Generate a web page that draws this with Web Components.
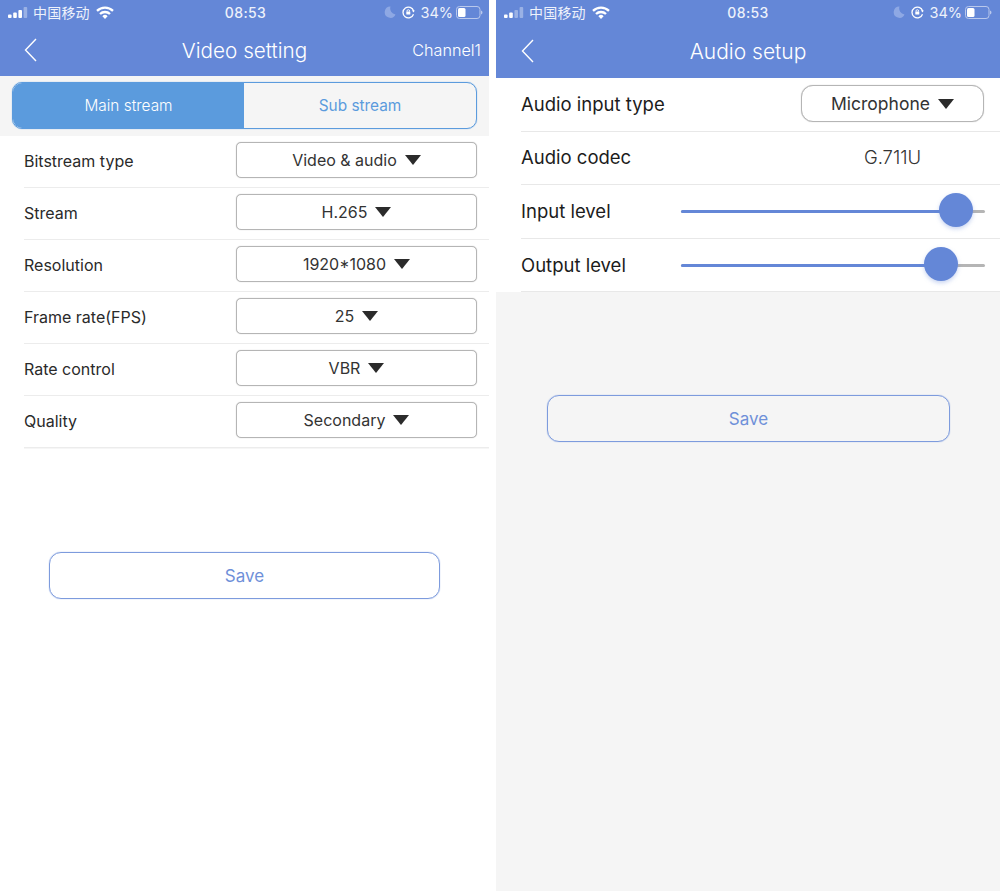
<!DOCTYPE html>
<html lang="en">
<head>
<meta charset="utf-8">
<title>Video and audio settings</title>
<style>
  html, body { margin: 0; height: 100%; background: #fff; }
  body {
    display: flex;
    gap: 7px;
    width: 1000px;
    height: 891px;
    overflow: hidden;
    font-family: Inter, "Noto Sans CJK SC", sans-serif;
  }
  #video { width: 489px; --head: 76px; --bottom: #fff; --pad-right: 6px; --chevron: 24px; --title: 20.7px; }
  #audio { width: 504px; --head: 78px; --bottom: #f5f5f5; --pad-right: 8px; --chevron: 25px; --title: 21px; }
</style>
</head>
<body>
<phone-screen id="video">
  <nav-bar title="Video setting" side="Channel1" signal="3"></nav-bar>
  <stream-tabs></stream-tabs>
  <setting-row label="Bitstream type"><drop-select value="Video &amp; audio"></drop-select></setting-row>
  <setting-row label="Stream"><drop-select value="H.265"></drop-select></setting-row>
  <setting-row label="Resolution"><drop-select value="1920*1080"></drop-select></setting-row>
  <setting-row label="Frame rate(FPS)"><drop-select value="25"></drop-select></setting-row>
  <setting-row label="Rate control"><drop-select value="VBR"></drop-select></setting-row>
  <setting-row label="Quality"><drop-select value="Secondary"></drop-select></setting-row>
  <save-button style="--top:104px;--left:49px;--width:391px;--height:47px"></save-button>
</phone-screen>

<phone-screen id="audio">
  <nav-bar title="Audio setup" signal="2"></nav-bar>
  <setting-row big label="Audio input type"><drop-select round value="Microphone"></drop-select></setting-row>
  <setting-row big label="Audio codec"><plain-value>G.711U</plain-value></setting-row>
  <setting-row big label="Input level"><level-slider level="275"></level-slider></setting-row>
  <setting-row big label="Output level"><level-slider level="260"></level-slider></setting-row>
  <save-button style="--top:103px;--left:51px;--width:403px;--height:47px"></save-button>
</phone-screen>

<script>
class PhoneScreen extends HTMLElement {
  constructor() {
    super();
    this.attachShadow({ mode: 'open' });
    this.shadowRoot.innerHTML = `
      <style>
        :host {
          display: flex;
          flex-direction: column;
          height: 891px;
          background: var(--bottom);
        }
      </style>
      <slot></slot>
    `;
  }
}

class NavBar extends HTMLElement {
  constructor() {
    super();
    this.attachShadow({ mode: 'open' });
  }

  connectedCallback() {
    const signal = Number(this.getAttribute('signal'));
    const bars = [3.5, 5.5, 8, 11].map((h, i) => {
      const fill = i < signal ? '#fff' : 'rgba(255,255,255,.35)';
      return `<rect x="${i * 5.2}" y="${11 - h}" width="3.6" height="${h}" rx=".9" fill="${fill}"/>`;
    }).join('');

    this.shadowRoot.innerHTML = `
      <style>
        :host {
          display: flex;
          flex-direction: column;
          height: var(--head);
          flex: none;
          background: #6487d7;
          color: #fff;
        }
        .status {
          display: flex;
          align-items: center;
          height: 24px;
          padding: 0 var(--pad-right) 0 8px;
          font-size: 14.5px;
          color: #eef2fb;
        }
        .left, .right { flex: 1; display: flex; align-items: center; }
        .right { justify-content: flex-end; }
        .carrier { margin: 0 6px 0 5px; font-size: 14px; letter-spacing: .2px; }
        .time { font-weight: 500; font-size: 14px; letter-spacing: .4px; }
        .pct { margin: 0 3px 0 5px; }
        .moon { margin-right: 6px; }
        .bar {
          flex: 1;
          display: grid;
          grid-template-columns: 1fr auto 1fr;
          align-items: center;
          font-weight: 300;
        }
        .bar svg { margin-left: var(--chevron); }
        .title { font-size: var(--title); }
        .side { justify-self: end; padding-right: 8px; font-size: 16.2px; }
      </style>
      <div class="status">
        <div class="left">
          <svg width="20" height="11" viewBox="0 0 20 11">${bars}</svg>
          <span class="carrier">中国移动</span>
          <svg width="18" height="13" viewBox="0 0 18 13" fill="none" stroke="#fff" stroke-width="2.3">
            <path d="M1 4.8a11.5 11.5 0 0 1 16 0"/>
            <path d="M4 8a7.2 7.2 0 0 1 10 0"/>
            <path d="M9 13l-2.6-2.8a3.6 3.6 0 0 1 5.2 0z" fill="#fff" stroke="none"/>
          </svg>
        </div>
        <span class="time">08:53</span>
        <div class="right">
          <svg class="moon" width="12" height="12" viewBox="0 0 12 12"><path d="M6.5.6a5.6 5.6 0 1 0 5 7.8A6 6 0 0 1 6.5.6z" fill="#8ea8e4"/></svg>
          <svg width="13" height="13" viewBox="0 0 13 13" fill="none" stroke="#fff" stroke-width="1.3">
            <path d="M11.5 8.3A5.4 5.4 0 1 1 11.6 5"/>
            <rect x="4.3" y="5.6" width="4" height="3" rx=".5" fill="#fff" stroke="none"/>
            <path d="M5 5.6V5a1.3 1.3 0 0 1 2.6 0v.6" stroke-width=".9"/>
            <path d="M10 4.5h2.8L11.5 6.6z" fill="#fff" stroke="none"/>
          </svg>
          <span class="pct">34%</span>
          <svg width="27" height="13" viewBox="0 0 27 13">
            <rect x=".5" y=".5" width="23.5" height="12" rx="3" fill="none" stroke="#b9c8ec"/>
            <rect x="2" y="2" width="7.5" height="9" rx="1.5" fill="#fff"/>
            <path d="M25 4.5a2 2 0 0 1 1.5 2a2 2 0 0 1-1.5 2z" fill="#b9c8ec"/>
          </svg>
        </div>
      </div>
      <div class="bar">
        <svg width="13" height="24" viewBox="0 0 13 24" fill="none" stroke="#fff" stroke-width="1.4"><path d="M12 1L1.5 12 12 23"/></svg>
        <span class="title">${this.getAttribute('title')}</span>
        ${this.hasAttribute('side') ? `<span class="side">${this.getAttribute('side')}</span>` : ''}
      </div>
    `;
  }
}

class StreamTabs extends HTMLElement {
  constructor() {
    super();
    this.attachShadow({ mode: 'open' });
    this.shadowRoot.innerHTML = `
      <style>
        :host {
          display: block;
          flex: none;
          height: 60px;
          box-sizing: border-box;
          padding: 6px 12px 7px;
          background: #f5f5f5;
        }
        .tabs {
          display: grid;
          grid-template-columns: 231px 1fr;
          height: 47px;
          box-sizing: border-box;
          border: 1px solid #5b9bdd;
          border-radius: 10px;
          box-shadow: 0 0 1px #5b9bdd;
          overflow: hidden;
          font-size: 15.4px;
          font-weight: 300;
        }
        .tabs div { display: flex; align-items: center; justify-content: center; }
        .on { background: #5b9bdd; color: #fff; }
        .off { color: #5b9bdd; font-weight: 400; }
      </style>
      <div class="tabs">
        <div class="on">Main stream</div>
        <div class="off">Sub stream</div>
      </div>
    `;
  }
}

class SettingRow extends HTMLElement {
  constructor() {
    super();
    this.attachShadow({ mode: 'open' });
  }

  connectedCallback() {
    this.shadowRoot.innerHTML = `
      <style>
        :host {
          display: flex;
          flex: none;
          align-items: center;
          justify-content: space-between;
          height: 52px;
          box-sizing: border-box;
          margin-left: 24px;
          padding-right: 12px;
          background: #fff;
          border-bottom: 1px solid #ececec;
          box-shadow: 0 1px 0 #f6f6f6;
          font-size: 16px;
          font-weight: 400;
          color: #2a2a2a;
        }
        span { margin-bottom: 2px; }
        :host([big]) {
          height: 53.6px;
          margin-left: 0;
          padding-left: 25px;
          padding-right: 16px;
          font-size: 18.5px;
          color: #1c1c1c;
          border-bottom: none;
          box-shadow: none;
          position: relative;
        }
        :host([big])::after {
          content: "";
          position: absolute;
          left: 25px;
          right: 0;
          bottom: 0;
          height: 1px;
          background: #e8e8e8;
        }
      </style>
      <span>${this.getAttribute('label')}</span>
      <slot></slot>
    `;
  }
}

class DropSelect extends HTMLElement {
  constructor() {
    super();
    this.attachShadow({ mode: 'open' });
  }

  connectedCallback() {
    this.shadowRoot.innerHTML = `
      <style>
        :host {
          display: flex;
          align-items: center;
          justify-content: center;
          gap: 8px;
          width: 241px;
          height: 36px;
          margin-bottom: 4px;
          box-sizing: border-box;
          border: 1px solid #b5b5b5;
          border-radius: 5px;
          box-shadow: 0 0 1px #b5b5b5;
          background: #fff;
          color: #333;
          font-size: 16px;
        }
        :host([round]) {
          width: 183px;
          height: 37px;
          margin-bottom: 2px;
          border-radius: 12px;
          font-size: 17.5px;
        }
        svg { margin-top: 1px; }
      </style>
      <span>${this.getAttribute('value')}</span>
      <svg width="16" height="10" viewBox="0 0 16 10"><path d="M0 0h16L8 10z" fill="#2b2b2b"/></svg>
    `;
  }
}

class PlainValue extends HTMLElement {
  constructor() {
    super();
    this.attachShadow({ mode: 'open' });
    this.shadowRoot.innerHTML = `
      <style>
        :host {
          display: block;
          width: 183px;
          text-align: center;
          font-size: 18.5px;
          font-weight: 300;
          color: #333;
          padding-bottom: 2px;
        }
      </style>
      <slot></slot>
    `;
  }
}

class LevelSlider extends HTMLElement {
  constructor() {
    super();
    this.attachShadow({ mode: 'open' });
  }

  connectedCallback() {
    const level = this.getAttribute('level');
    this.shadowRoot.innerHTML = `
      <style>
        :host {
          display: block;
          position: relative;
          width: 304px;
          height: 3px;
          margin-right: -1px;
          background: #b5b5b5;
          border-radius: 2px;
        }
        .fill { height: 3px; background: #6487d7; border-radius: 2px; }
        .thumb {
          position: absolute;
          top: -17px;
          width: 34px;
          height: 34px;
          margin-left: -17px;
          border-radius: 50%;
          background: #6487d7;
          box-shadow: 0 2px 4px rgba(100, 135, 215, .35);
        }
      </style>
      <div class="fill" style="width:${level}px"></div>
      <div class="thumb" style="left:${level}px"></div>
    `;
  }
}

class SaveButton extends HTMLElement {
  constructor() {
    super();
    this.attachShadow({ mode: 'open' });
    this.shadowRoot.innerHTML = `
      <style>
        :host {
          display: flex;
          flex: none;
          align-items: center;
          justify-content: center;
          width: var(--width);
          height: var(--height);
          margin: var(--top) 0 0 var(--left);
          box-sizing: border-box;
          border: 1px solid #7d9bdd;
          border-radius: 12px;
          box-shadow: 0 0 1px #7d9bdd;
          color: #6f90d9;
          font-size: 17px;
          font-weight: 400;
        }
      </style>
      <span>Save</span>
    `;
  }
}

customElements.define('phone-screen', PhoneScreen);
customElements.define('nav-bar', NavBar);
customElements.define('stream-tabs', StreamTabs);
customElements.define('setting-row', SettingRow);
customElements.define('drop-select', DropSelect);
customElements.define('plain-value', PlainValue);
customElements.define('level-slider', LevelSlider);
customElements.define('save-button', SaveButton);
</script>
</body>
</html>
